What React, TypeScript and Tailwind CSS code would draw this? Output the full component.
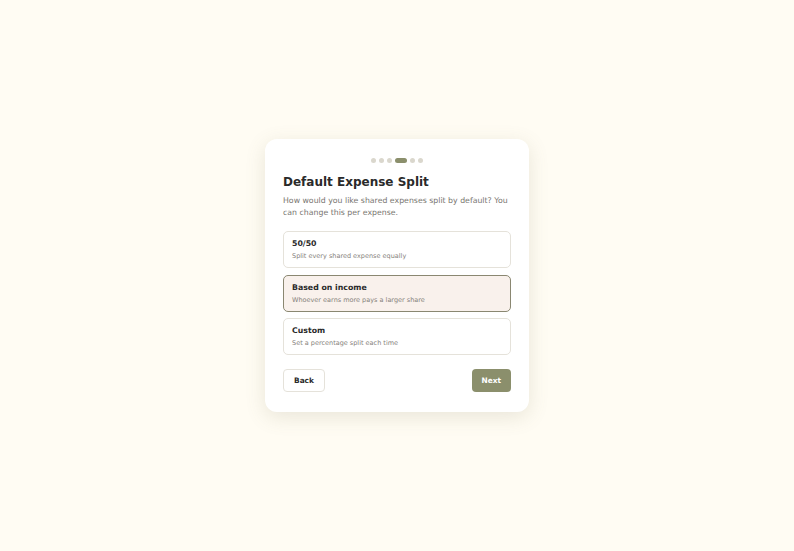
import { useState } from "react";

const options = [
  { id: "equal", title: "50/50", desc: "Split every shared expense equally" },
  { id: "income", title: "Based on income", desc: "Whoever earns more pays a larger share" },
  { id: "custom", title: "Custom", desc: "Set a percentage split each time" },
];

function Steps({ current, total }: { current: number; total: number }) {
  return (
    <div className="flex h-[5px] items-center justify-center gap-[3px]">
      {Array.from({ length: total }).map((_, i) =>
        i === current ? (
          <span key={i} className="h-[5px] w-[12px] rounded-full bg-[#8b8f6c]" />
        ) : (
          <span key={i} className="h-[5px] w-[5px] rounded-full bg-[#dad7cd]" />
        )
      )}
    </div>
  );
}

export default function App() {
  const [selected, setSelected] = useState("income");

  return (
    <div
      className="flex min-h-screen items-center justify-center bg-[#fffcf3]"
      style={{ fontFamily: '"DejaVu Sans", Verdana, sans-serif' }}
    >
      <div className="w-[264px] rounded-[12px] bg-white px-[18px] pt-[19px] pb-[20px] shadow-[0_5px_20px_rgba(120,110,80,0.16)]">
        <Steps current={3} total={6} />

        <h1 className="mt-[10.5px] text-[12px] font-bold leading-[16px] text-[#2a2a2a]">Default Expense Split</h1>
        <p className="mt-[5.5px] text-[7.8px] leading-[12px] text-[#78756f]">
          How would you like shared expenses split by default? You can change this per expense.
        </p>

        <div className="mt-[12px] flex flex-col gap-[6.5px]">
          {options.map((o) => {
            const active = o.id === selected;
            return (
              <button
                key={o.id}
                type="button"
                onClick={() => setSelected(o.id)}
                className={
                  "flex h-[37px] flex-col justify-center rounded-[5px] border-[1.2px] px-[8px] text-left " +
                  (active ? "border-[#8a8771] bg-[#f9f1ec]" : "border-[#e5e2da] bg-white")
                }
              >
                <span className="text-[7.8px] font-bold leading-[12px] text-[#2a2a2a]">{o.title}</span>
                <span className="mt-[1px] text-[6.5px] leading-[10px] text-[#85817b]">{o.desc}</span>
              </button>
            );
          })}
        </div>

        <div className="mt-[14px] flex items-center justify-between">
          <button
            type="button"
            className="h-[23px] rounded-[4px] border-[1.2px] border-[#e5e2da] bg-white px-[10px] text-[7.4px] font-bold text-[#2a2a2a]"
          >
            Back
          </button>
          <button
            type="button"
            className="h-[23px] rounded-[4px] bg-[#8b8f6c] px-[10px] text-[7.4px] font-bold text-white"
          >
            Next
          </button>
        </div>
      </div>
    </div>
  );
}
